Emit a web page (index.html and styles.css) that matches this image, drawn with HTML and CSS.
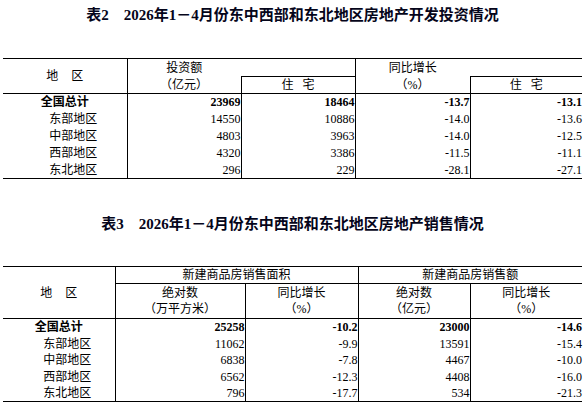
FILE: index.html
```html
<!DOCTYPE html>
<html lang="zh-CN">
<head>
    <meta charset="UTF-8">
    <title>2026年1－4月份东中西部和东北地区房地产情况</title>
    <link rel="stylesheet" href="styles.css">
</head>
<body>
    <div class="page">
        <h1 class="title title-invest">表2　2026年1－4月份东中西部和东北地区房地产开发投资情况</h1>

        <table class="stat">
            <colgroup>
                <col style="width: 124px">
                <col style="width: 114px">
                <col style="width: 114px">
                <col style="width: 115px">
                <col style="width: 112px">
            </colgroup>
            <thead>
                <tr class="h-top">
                    <th rowspan="2" class="region-head">地 区</th>
                    <th class="vl">投资额</th>
                    <th class="hl"></th>
                    <th class="vl">同比增长</th>
                    <th class="hl"></th>
                </tr>
                <tr class="h-sub">
                    <th class="vl">（亿元）</th>
                    <th class="vl pair">住 宅</th>
                    <th class="vl">（%）</th>
                    <th class="vl pair">住 宅</th>
                </tr>
            </thead>
            <tbody>
                <tr class="total">
                    <td class="name">全国总计</td>
                    <td class="vl num">23969</td>
                    <td class="vl num">18464</td>
                    <td class="vl num">-13.7</td>
                    <td class="vl num">-13.1</td>
                </tr>
                <tr>
                    <td class="name sub">东部地区</td>
                    <td class="vl num">14550</td>
                    <td class="vl num">10886</td>
                    <td class="vl num">-14.0</td>
                    <td class="vl num">-13.6</td>
                </tr>
                <tr>
                    <td class="name sub">中部地区</td>
                    <td class="vl num">4803</td>
                    <td class="vl num">3963</td>
                    <td class="vl num">-14.0</td>
                    <td class="vl num">-12.5</td>
                </tr>
                <tr>
                    <td class="name sub">西部地区</td>
                    <td class="vl num">4320</td>
                    <td class="vl num">3386</td>
                    <td class="vl num">-11.5</td>
                    <td class="vl num">-11.1</td>
                </tr>
                <tr>
                    <td class="name sub">东北地区</td>
                    <td class="vl num">296</td>
                    <td class="vl num">229</td>
                    <td class="vl num">-28.1</td>
                    <td class="vl num">-27.1</td>
                </tr>
            </tbody>
        </table>

        <h1 class="title title-sales">表3　2026年1－4月份东中西部和东北地区房地产销售情况</h1>

        <table class="stat stat-sales">
            <colgroup>
                <col style="width: 112px">
                <col style="width: 130px">
                <col style="width: 113px">
                <col style="width: 112px">
                <col style="width: 112px">
            </colgroup>
            <thead>
                <tr class="h-top">
                    <th rowspan="2" class="region-head">地 区</th>
                    <th colspan="2" class="vl hl">新建商品房销售面积</th>
                    <th colspan="2" class="vl hl">新建商品房销售额</th>
                </tr>
                <tr class="h-two">
                    <th class="vl">绝对数<br>（万平方米）</th>
                    <th class="vl">同比增长<br>（%）</th>
                    <th class="vl">绝对数<br>（亿元）</th>
                    <th class="vl">同比增长<br>（%）</th>
                </tr>
            </thead>
            <tbody>
                <tr class="total">
                    <td class="name">全国总计</td>
                    <td class="vl num">25258</td>
                    <td class="vl num">-10.2</td>
                    <td class="vl num">23000</td>
                    <td class="vl num">-14.6</td>
                </tr>
                <tr class="r16">
                    <td class="name sub">东部地区</td>
                    <td class="vl num">11062</td>
                    <td class="vl num">-9.9</td>
                    <td class="vl num">13591</td>
                    <td class="vl num">-15.4</td>
                </tr>
                <tr>
                    <td class="name sub">中部地区</td>
                    <td class="vl num">6838</td>
                    <td class="vl num">-7.8</td>
                    <td class="vl num">4467</td>
                    <td class="vl num">-10.0</td>
                </tr>
                <tr class="r16">
                    <td class="name sub">西部地区</td>
                    <td class="vl num">6562</td>
                    <td class="vl num">-12.3</td>
                    <td class="vl num">4408</td>
                    <td class="vl num">-16.0</td>
                </tr>
                <tr>
                    <td class="name sub">东北地区</td>
                    <td class="vl num">796</td>
                    <td class="vl num">-17.7</td>
                    <td class="vl num">534</td>
                    <td class="vl num">-21.3</td>
                </tr>
            </tbody>
        </table>
    </div>
</body>
</html>
```

FILE: styles.css
```css
* {
    box-sizing: border-box;
    margin: 0;
    padding: 0;
}

body {
    font-family: "Liberation Serif", "Noto Sans CJK SC", serif;
    font-size: 12px;
    color: #000;
    background-color: #fff;
    text-spacing-trim: space-all;
}

.page {
    width: 587px;
    padding: 0 5px 0 3px;
}

.title {
    font-size: 15px;
    font-weight: bold;
    line-height: 20px;
    text-align: center;
    color: #05051a;
}

.title-invest {
    margin-top: 5px;
    margin-bottom: 33px;
}

.title-sales {
    margin-top: 35px;
    margin-bottom: 32px;
}

.stat {
    width: 579px;
    table-layout: fixed;
    border-collapse: collapse;
}

.stat th,
.stat td {
    border: 0;
    padding: 0;
    line-height: 16px;
    white-space: nowrap;
}

.stat th {
    font-weight: normal;
    text-align: center;
}

/* rules: top, bottom of the header and bottom of the table */
.stat thead tr:first-child th {
    border-top: 1px solid #000;
}

.stat .region-head,
.stat thead tr:last-child th {
    border-bottom: 1px solid #000;
}

.stat tbody tr:last-child td {
    border-bottom: 1px solid #000;
}

.stat .vl {
    border-left: 1px solid #000;
}

.stat .hl {
    border-bottom: 1px solid #000;
}

.h-top {
    height: 18px;
}

.h-sub {
    height: 16px;
}

.stat-sales .h-top {
    height: 17px;
}

.h-two {
    height: 35px;
}

.h-two th {
    line-height: 16px;
}

.region-head {
    word-spacing: 10px;
}

.pair {
    word-spacing: 6px;
}

.stat tbody tr {
    height: 17px;
}

.stat tbody tr.r16 {
    height: 16px;
}

.name {
    text-align: center;
}

.name.sub {
    padding-left: 17px;
}

.num {
    text-align: right;
    padding-right: 7px;
}

.total td {
    font-weight: bold;
}
```
